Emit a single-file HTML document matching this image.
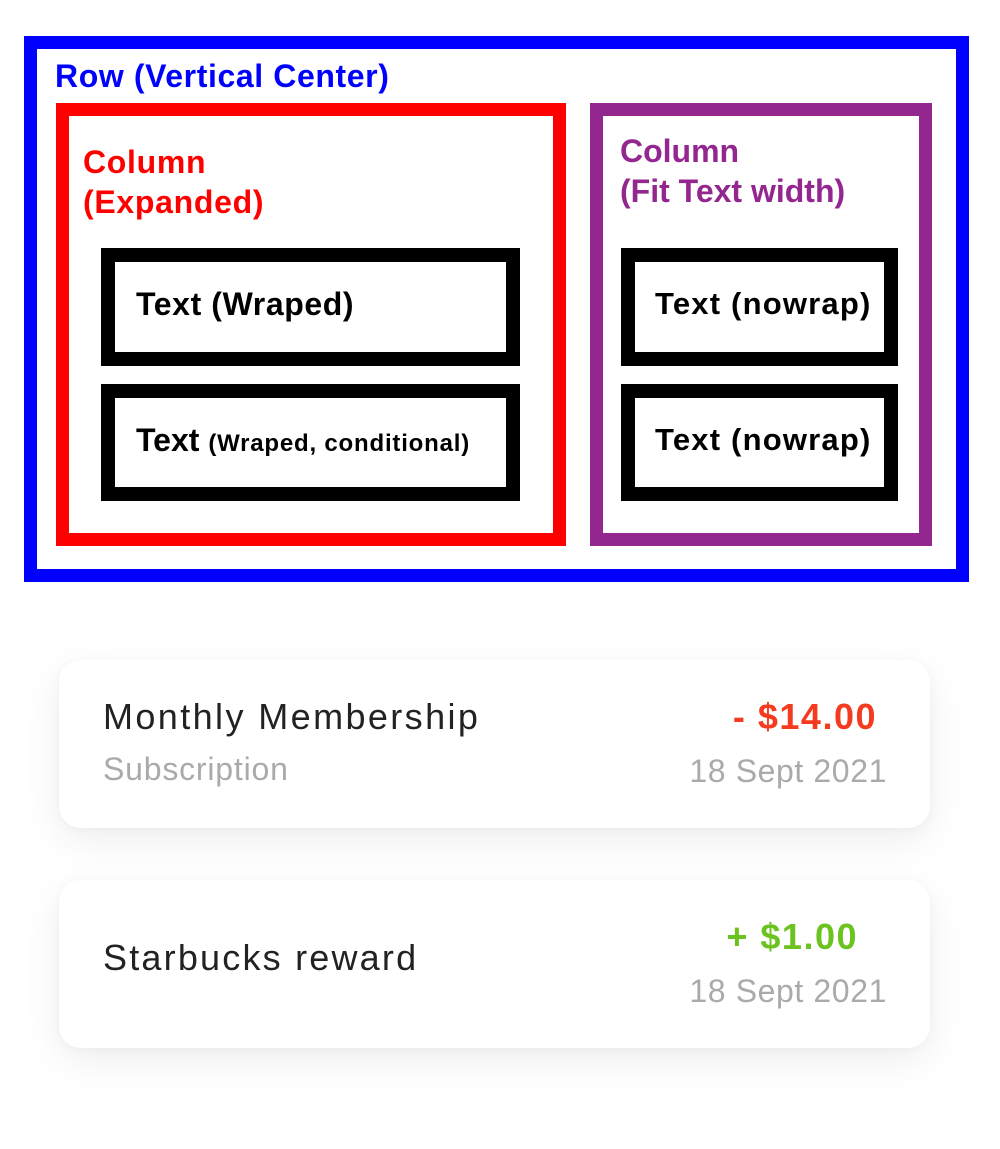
<!DOCTYPE html>
<html><head><meta charset="utf-8"><style>
*{margin:0;padding:0;box-sizing:border-box}
body{width:1000px;height:1149px;background:#fff;position:relative;font-family:"Liberation Sans",Arial,sans-serif;overflow:hidden}
.b{position:absolute}
.lbl{position:absolute;font-weight:bold;white-space:nowrap}
.card{position:absolute;left:59px;width:871px;height:168px;background:#fff;border-radius:22px;box-shadow:0 12px 40px rgba(0,0,0,0.07),0 2px 10px rgba(0,0,0,0.03)}
.t{position:absolute;white-space:nowrap}
</style></head><body>
<div class="b" style="left:24px;top:36px;width:945px;height:546px;border:13px solid #0000ff"></div>
<div class="lbl" style="left:55px;top:58px;font-size:32px;letter-spacing:0.6px;color:#0000ff">Row (Vertical Center)</div>

<div class="b" style="left:56px;top:103px;width:510px;height:443px;border:13px solid #ff0000"></div>
<div class="lbl" style="left:83px;top:142px;font-size:32px;line-height:40px;letter-spacing:0.7px;color:#ff0000">Column<br>(Expanded)</div>
<div class="b" style="left:101px;top:248px;width:419px;height:118px;border:14px solid #000"></div>
<div class="lbl" style="left:136px;top:286px;font-size:32px;letter-spacing:0.6px;color:#000">Text (Wraped)</div>
<div class="b" style="left:101px;top:384px;width:419px;height:117px;border:14px solid #000"></div>
<div class="lbl" style="left:136px;top:422px;font-size:32px;color:#000">Text <span style="font-size:24px;letter-spacing:0.8px">(Wraped, conditional)</span></div>

<div class="b" style="left:590px;top:103px;width:342px;height:443px;border:13px solid #93278f"></div>
<div class="lbl" style="left:620px;top:131px;font-size:32px;line-height:40px;color:#93278f">Column<br>(Fit Text width)</div>
<div class="b" style="left:621px;top:248px;width:277px;height:118px;border:14px solid #000"></div>
<div class="lbl" style="left:655px;top:286px;font-size:31px;letter-spacing:1.2px;color:#000">Text (nowrap)</div>
<div class="b" style="left:621px;top:384px;width:277px;height:117px;border:14px solid #000"></div>
<div class="lbl" style="left:655px;top:422px;font-size:31px;letter-spacing:1.2px;color:#000">Text (nowrap)</div>

<div class="card" style="top:660px"></div>
<div class="t" style="left:103px;top:696px;font-size:36px;color:#222;letter-spacing:2.4px">Monthly Membership</div>
<div class="t" style="left:103px;top:751px;font-size:32px;color:#aaa;letter-spacing:0.8px">Subscription</div>
<div class="t" style="right:123px;top:696px;font-size:36px;color:#f53b1f;font-weight:bold;letter-spacing:1.5px">- $14.00</div>
<div class="t" style="right:113px;top:753px;font-size:32px;color:#aaa;letter-spacing:0.6px">18 Sept 2021</div>

<div class="card" style="top:880px"></div>
<div class="t" style="left:103px;top:937px;font-size:36px;color:#222;letter-spacing:2.2px">Starbucks reward</div>
<div class="t" style="right:142px;top:916px;font-size:36px;color:#6cc21e;font-weight:bold;letter-spacing:1.5px">+ $1.00</div>
<div class="t" style="right:113px;top:973px;font-size:32px;color:#aaa;letter-spacing:0.6px">18 Sept 2021</div>
</body></html>
